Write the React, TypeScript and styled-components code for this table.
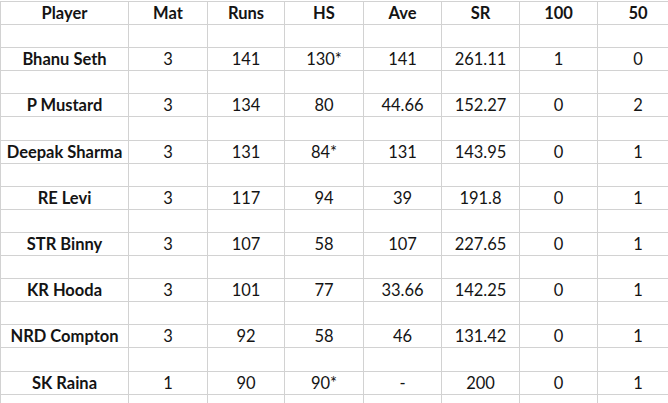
import styled, { createGlobalStyle } from 'styled-components';

const GlobalStyle = createGlobalStyle`
  html, body {
    margin: 0;
    padding: 0;
    background: #ffffff;
    overflow: hidden;
  }
`;

const ScSheet = styled.div`
  width: 668px;
  height: 403px;
  overflow: hidden;
  padding-top: 1px;
  background: #ffffff;
`;

const ScTable = styled.table`
  border-collapse: collapse;
  table-layout: fixed;
  width: 678px;
  font-family: Lato, 'Open Sans', sans-serif;
  font-size: 16.5px;
  color: #141414;
`;

const ScRow = styled.tr`
  height: 23.1px;
`;

const ScCell = styled.td<{ $bold?: boolean }>`
  border: 1px solid #d2d2d2;
  padding: 0;
  text-align: center;
  vertical-align: middle;
  white-space: nowrap;
  font-weight: ${(p) => (p.$bold ? 700 : 400)};
  line-height: 20px;
`;

const columns = [128, 79, 77, 79, 78, 78, 78, 81];
const headers = ['Player', 'Mat', 'Runs', 'HS', 'Ave', 'SR', '100', '50'];

const players: string[][] = [
  ['Bhanu Seth', '3', '141', '130*', '141', '261.11', '1', '0'],
  ['P Mustard', '3', '134', '80', '44.66', '152.27', '0', '2'],
  ['Deepak Sharma', '3', '131', '84*', '131', '143.95', '0', '1'],
  ['RE Levi', '3', '117', '94', '39', '191.8', '0', '1'],
  ['STR Binny', '3', '107', '58', '107', '227.65', '0', '1'],
  ['KR Hooda', '3', '101', '77', '33.66', '142.25', '0', '1'],
  ['NRD Compton', '3', '92', '58', '46', '131.42', '0', '1'],
  ['SK Raina', '1', '90', '90*', '-', '200', '0', '1'],
];

export const App = () => {
  return (
    <ScSheet>
      <GlobalStyle />
      <ScTable>
        <colgroup>
          {columns.map((w, i) => (
            <col key={i} style={{ width: w }} />
          ))}
        </colgroup>
        <tbody>
          <ScRow>
            {headers.map((h) => (
              <ScCell key={h} $bold>
                {h}
              </ScCell>
            ))}
          </ScRow>
          {players.map((row) => [
            <ScRow key={`${row[0]}-gap`}>
              {headers.map((h) => (
                <ScCell key={h} />
              ))}
            </ScRow>,
            <ScRow key={row[0]}>
              {row.map((value, i) => (
                <ScCell key={i} $bold={i === 0}>
                  {value}
                </ScCell>
              ))}
            </ScRow>,
          ])}
          <ScRow>
            {headers.map((h) => (
              <ScCell key={h} />
            ))}
          </ScRow>
        </tbody>
      </ScTable>
    </ScSheet>
  );
};

export default App;
